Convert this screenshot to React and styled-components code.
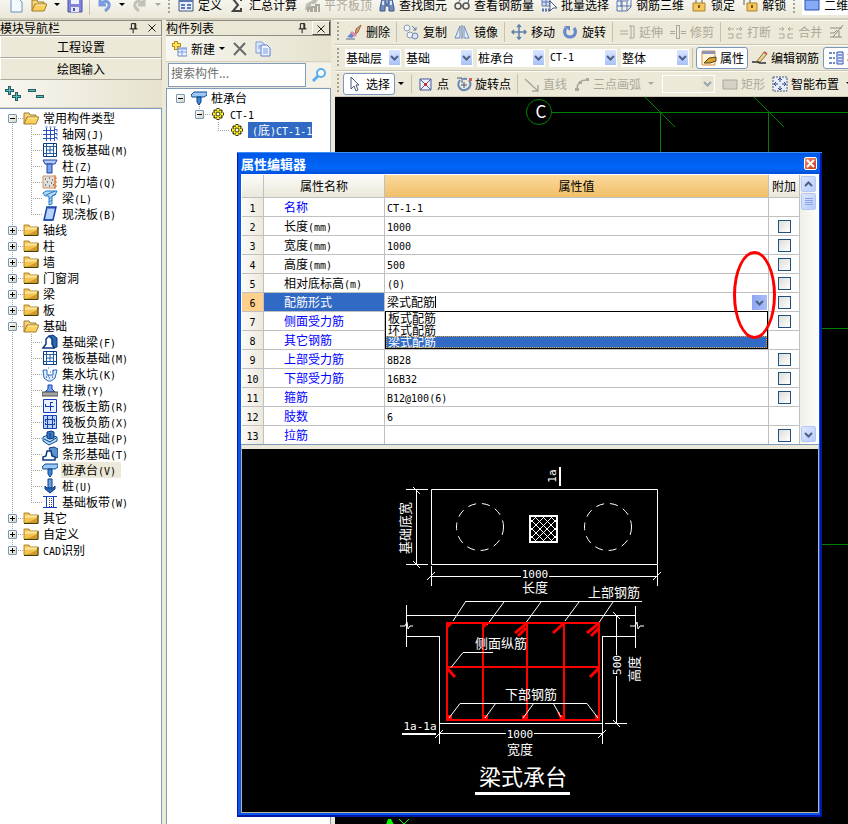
import { Fragment } from "react";
import styled, { createGlobalStyle, css } from "styled-components";

const CJK = `"Noto Sans CJK SC", "Liberation Sans", sans-serif`;
const MONO = `"DejaVu Sans Mono", "Noto Sans CJK SC", monospace`;

const GlobalStyle = createGlobalStyle`
  * {
    box-sizing: border-box;
  }

  body {
    margin: 0;
    overflow: hidden;
    background: #ece9d8;
    color: #000;
    font: 12px/16px ${CJK};
  }

  button,
  input,
  select {
    margin: 0;
    font: inherit;
    color: inherit;
  }
`;

/* ---------- text ---------- */

const Latin = styled.span`
  font-family: ${MONO};
  font-size: 10px;
  line-height: 10px;
`;

// Latin runs are half as wide as a Chinese character
function Label({ children }) {
  return (
    <span>
      {children.split(/([\x21-\x7e]+)/).map((part, i) =>
        i % 2 ? <Latin key={i}>{part}</Latin> : <Fragment key={i}>{part}</Fragment>
      )}
    </span>
  );
}

/* ---------- icons ---------- */

const icons = {
  doc: (
    <path d="M3 1h7l4 4v10H3z" fill="#f4f9ff" stroke="#6d8fb8" />
  ),
  folderOpen: (
    <>
      <path d="M1 14V3h5l1 2h6v3" fill="#f6d478" stroke="#9a7a30" />
      <path d="M1 14l3-7h12l-3 7z" fill="#fbcf5c" stroke="#a07c28" />
      <path d="M5 8h9" stroke="#fff0b4" />
    </>
  ),
  folder: (
    <>
      <path d="M1 13V3h5l1 2h8v8z" fill="#f2c34c" stroke="#b08a30" />
      <path d="M2 6h12M2 7h11" stroke="#fff0b4" />
      <path d="M14 8v5H4z" fill="#d09a28" />
      <path d="M15 5v8.500H1" fill="none" stroke="#4a3808" />
    </>
  ),
  save: (
    <>
      <path d="M1 1h14v14H1z" fill="#8085d8" stroke="#4b50a8" />
      <path d="M4 1h8v6H4z" fill="#eef2ff" />
      <path d="M4 10h8v5H4z" fill="#e6e6f2" />
      <path d="M6 11h2v3H6z" fill="#4b50a8" />
    </>
  ),
  undo: (
    <path d="M4 2v6h6M4 8c2-4 8-5 9-1 1 3-1 5-4 7" fill="none" stroke="#7a9be0" strokeWidth="3" />
  ),
  redo: (
    <path d="M12 2v6H6M12 8c-2-4-8-5-9-1-1 3 1 5 4 7" fill="none" stroke="#c4c2b6" strokeWidth="3" />
  ),
  table: (
    <>
      <path d="M1 2h14v12H1z" fill="#e8effa" stroke="#46597e" />
      <path d="M1 2h14v3H1z" fill="#5c78b0" />
      <path d="M3 8h4M9 8h4M3 11h4M9 11h4" stroke="#5c78b0" strokeWidth="2" />
    </>
  ),
  sigma: (
    <path d="M12 4V2H4l5 6-5 6h8v-3" fill="none" stroke="#444" strokeWidth="2" />
  ),
  slab: (
    <>
      <path d="M2 7l9-5 3 1-3 4H7v6H1z" fill="#c0beb0" />
      <path d="M4 15v-4h3v4M8 15v-5h3v5M12 15V8h3v7" fill="none" stroke="#aaa89a" strokeWidth="2" />
    </>
  ),
  binoculars: (
    <>
      <path d="M3 2h4v5h2V2h4l2 9v3h-5V9H6v5H1v-3z" fill="#6e8cc0" stroke="#3d5688" />
      <path d="M4 4v4M12 4v4" stroke="#dbe6fa" strokeWidth="2" />
    </>
  ),
  glasses: (
    <>
      <circle cx="4" cy="9" r="3" fill="none" stroke="#555" strokeWidth="1.5" />
      <circle cx="12" cy="9" r="3" fill="none" stroke="#555" strokeWidth="1.5" />
      <path d="M7 9h2M4 6l3-4M14 6l1-4" stroke="#555" />
    </>
  ),
  batch: (
    <>
      <path d="M1 1h8v8H1zM1 5h8M5 1v8" fill="#cfdcf4" stroke="#5c78b0" />
      <path d="M1 13h8" stroke="#5c78b0" strokeWidth="3" strokeDasharray="2 1" />
      <path d="M9 4v10l3-3h4z" fill="#fff" stroke="#46597e" />
    </>
  ),
  cage: (
    <path
      d="M1 4h10v10H1zM1 4l4-3h10v9l-4 4M11 4l4-3M6 4v10M1 9h14M5 1v9"
      fill="none"
      stroke="#5876b4"
    />
  ),
  lock: (
    <>
      <path d="M5 7V4c0-4 6-4 6 0v3" fill="none" stroke="#a8a8a8" strokeWidth="2" />
      <path d="M2 6h12v8H2z" fill="#f3c660" stroke="#b08428" />
      <path d="M8 8v3" stroke="#7a5810" strokeWidth="2" />
    </>
  ),
  unlock: (
    <>
      <path d="M2 8V4c0-4 6-4 6 0v2" fill="none" stroke="#a8a8a8" strokeWidth="2" />
      <path d="M5 6h10v8H5z" fill="#f3c660" stroke="#b08428" />
      <path d="M10 8v3" stroke="#7a5810" strokeWidth="2" />
    </>
  ),
  plane: <path d="M1 3h14v10H1z" fill="#86aaf6" stroke="#2c50b0" />,
  erase: (
    <>
      <path d="M10 5l5-4-3 7-3 3z" fill="#d8a070" stroke="#9a6a48" />
      <path d="M6 7l5 4-2 2-5-4z" fill="#e08ca8" />
      <path d="M1 13l4-4 3 3-2 2z" fill="#6888d0" />
      <path d="M0 15h9" stroke="#5a6a90" />
    </>
  ),
  copy2: (
    <>
      <circle cx="4" cy="4" r="3" fill="#f2f4f8" stroke="#8a9ab8" />
      <circle cx="7" cy="11" r="3" fill="#f2f4f8" stroke="#8a9ab8" />
      <circle cx="12" cy="12" r="3" fill="#d8e2f2" stroke="#6e84b0" />
      <path d="M9 2l4 4M13 3v3h-3" fill="none" stroke="#5c78b0" />
    </>
  ),
  mirror: (
    <>
      <path d="M6 2v12H1zM10 2v12h5z" fill="#e4ecfa" stroke="#6e8cc0" />
      <path d="M8 1v14" stroke="#5c78b0" />
    </>
  ),
  move: (
    <path
      d="M8 1v14M1 8h14M6 3l2-2 2 2M6 13l2 2 2-2M3 6L1 8l2 2M13 6l2 2-2 2"
      fill="none"
      stroke="#6080b0"
      strokeWidth="1.5"
    />
  ),
  rotate: (
    <>
      <path d="M4 4c-3 4-1 9 4 9s7-5 4-9" fill="none" stroke="#6888cc" strokeWidth="3" />
      <path d="M2 2h6v5z" fill="#6888cc" />
    </>
  ),
  extend: (
    <path d="M1 7h8M1 10h8M12 2v12M15 2v12M10 2h5M10 14h5" fill="none" stroke="#aaa89a" />
  ),
  trim: (
    <path
      d="M0 7.500h5M0 9.500h5M11 7.500h5M11 9.500h5M6.500 1v14M9.500 1v14M6 1.500h4M6 14.500h4"
      fill="none"
      stroke="#aaa89a"
    />
  ),
  breakUp: (
    <path
      d="M1 5h6M9 5h6M3 3L1 5l2 2M13 3l2 2-2 2M1 10h5v4H1M15 10h-5v4h5"
      fill="none"
      stroke="#aaa89a"
    />
  ),
  merge: (
    <path
      d="M1 5h5M10 5h5M4 3l2 2-2 2M12 3l-2 2 2 2M1 10h5v4H1M15 10h-5v4h5"
      fill="none"
      stroke="#aaa89a"
    />
  ),
  split: (
    <path d="M1 4h12M1 13h12M4 13L14 1M1 9h4l3-3M10 13V7" fill="none" stroke="#8e8c80" />
  ),
  property: (
    <>
      <path d="M1 1h13v14H1z" fill="#fff4d8" stroke="#e09040" />
      <path d="M1 1h13v3H1z" fill="#8a96b8" />
      <path d="M3 13l5-5 7-1v4l-6 2z" fill="#d8a030" stroke="#5a4410" />
    </>
  ),
  pencil: (
    <>
      <path d="M5 11l7-9 3 2-7 8z" fill="#ead08c" stroke="#8a7444" />
      <path d="M12 2l3 2" stroke="#c85858" strokeWidth="2" />
      <path d="M0 12h5l3 1h6" fill="none" stroke="#333" strokeWidth="1.5" />
    </>
  ),
  params: (
    <>
      <path d="M9 2h6v12H9z" fill="#dfe9ff" stroke="#2c50b0" />
      <path d="M10 5h4M10 8h4M10 11h4" stroke="#2c50b0" />
      <path d="M1 3h3M1 8h3M1 13h3M5 3h2M5 8h2M5 13h2" stroke="#6e8cc0" strokeWidth="2" />
    </>
  ),
  cursor: <path d="M5 1v12l3-3 2 5 2-1-2-5h3z" fill="#fff" stroke="#46597e" />,
  point: (
    <>
      <path d="M2 3h11v11H2zM2 3l11 11M13 3L2 14" fill="#eef0fa" stroke="#4a5a98" />
      <path d="M6 7h3v3H6z" fill="#d03030" />
    </>
  ),
  rotatePoint: (
    <>
      <path d="M4 4c-4 5 0 11 5 10s7-6 4-10M7 3a6 6 0 0 1 4 0" fill="none" stroke="#6888b8" strokeWidth="2" />
      <path d="M1 2h5v5M8 6v6M5 9h6" fill="none" stroke="#46597e" />
      <path d="M13 2h3v3h-3z" fill="#d06060" />
    </>
  ),
  line: <path d="M1 3l12 11M14 9v6H8" fill="none" stroke="#aaa89a" strokeWidth="1.5" />,
  arc: (
    <>
      <path d="M3 13C3 7 7 4 13 4" fill="none" stroke="#aaa89a" strokeWidth="1.5" />
      <path d="M1 12h4v3H1zM5 5h3v3H5zM12 2h3v3h-3z" fill="#aaa89a" />
    </>
  ),
  rect: <path d="M1 4h14v9H1z" fill="#d4d2c4" stroke="#aaa89a" />,
  smart: (
    <>
      <path d="M1 1h14v14H1z" fill="#e8effa" stroke="#46597e" strokeDasharray="2 1" />
      <path
        d="M8 2v4M8 10v4M2 8h4M10 8h4M6 4l2-2 2 2M6 12l2 2 2-2M4 6L2 8l2 2M12 6l2 2-2 2"
        fill="none"
        stroke="#2c4888"
      />
    </>
  ),
  newItem: (
    <>
      <path d="M5 0v9M1 4h9" stroke="#b89018" strokeWidth="4" />
      <path d="M5 1v7M2 4h7" stroke="#ffe860" strokeWidth="2" />
      <path d="M7 7h9v8H7z" fill="#eef4ff" stroke="#6e8cc0" />
      <path d="M7 8h9M11 9v6M7 11h9" stroke="#7a9be0" />
    </>
  ),
  remove: <path d="M2 2l12 12M13 2L2 14" stroke="#6a6a6a" strokeWidth="2" />,
  duplicate: (
    <>
      <path d="M1 1h6l3 3v8H1z" fill="#dfe9ff" stroke="#7a9be0" />
      <path d="M6 4h6l3 3v8H6z" fill="#eef4ff" stroke="#5c80d0" />
      <path d="M8 8h5M8 10h5M8 12h5M3 5h3M3 7h3" stroke="#7a9be0" />
    </>
  ),
  expand: (
    <>
      <path d="M4.500 0v9M0 4.500h9M11.500 6v9M7 10.500h9" stroke="#2a5c60" strokeWidth="3" />
      <path d="M4.500 1v7M1 4.500h7M11.500 7v7M8 10.500h7" stroke="#4cc0c0" />
    </>
  ),
  collapse: (
    <>
      <path d="M0 4.500h8M8 10.500h8" stroke="#2a5c60" strokeWidth="3" />
      <path d="M1 4.500h6M9 10.500h6" stroke="#4cc0c0" />
    </>
  ),
  search: (
    <>
      <circle cx="10" cy="6" r="4" fill="#fff" stroke="#5aaef0" strokeWidth="2" />
      <path d="M7 9l-5 5" stroke="#5aaef0" strokeWidth="3" />
    </>
  ),
  grid: (
    <path
      d="M4.500 2v13M8.500 2v13M12.500 2v13M1 4.500h12M1 8.500h12M1 12.500h12M13 3.500h2v2M13 7.500h2v2M13 11.500h2v2M3.500 1h2M7.500 1h2M11.500 1h2"
      fill="none"
      stroke="#2850c0"
    />
  ),
  raft: (
    <>
      <path d="M1.500 1.500h13v13h-13z" fill="#fff" stroke="#0c3a80" />
      <path d="M4.500 2v12M11.500 2v12M2 4.500h12M2 11.500h12M8 5v6M5 8h6" stroke="#2460a8" />
    </>
  ),
  column: (
    <>
      <path d="M1 2h14l-2 4H3z" fill="#b4ccf8" stroke="#2040a0" />
      <path d="M5 6h5v9H5z" fill="#7aa4f0" stroke="#2040a0" />
    </>
  ),
  wall: (
    <>
      <path d="M1 2h12v12H1z" fill="#e0ded8" stroke="#c89468" />
      <path d="M3 5h1M7 4h1M10 6h1M5 8h1M9 9h1M3 11h1M7 12h1M11 11h1" stroke="#222" />
      <path d="M13 1v14M13 4h2M13 8h2M13 12h2" stroke="#e07020" />
    </>
  ),
  beam: (
    <>
      <path d="M1 3l3-2h11l-2 4-3 1v8l-3 1V6H3z" fill="#b4dcfa" stroke="#2878c0" />
      <path d="M4 5l9-4M10 6l4-2M7 9l3-2M7 12l3-2" stroke="#2878c0" />
    </>
  ),
  cast: (
    <>
      <path d="M5 1h9l-3 13H2z" fill="#b8d4fa" stroke="#1440a8" strokeWidth="1.5" />
      <path d="M6 2h7M3 14h8" stroke="#1440a8" />
    </>
  ),
  footBeam: (
    <>
      <path d="M7 2l4-1 4 3v9l-4 1z" fill="#2868b0" stroke="#0c3a80" />
      <path d="M1 14l3-4V5l3-3 3 3v5l2 4z" fill="#fff" stroke="#0c3a80" strokeWidth="1.5" />
    </>
  ),
  pit: (
    <>
      <path d="M1 4h4v5h6V4h4l-2 8-4 3H6l-4-3z" fill="#dcebfc" stroke="#2868c0" />
      <path d="M4 11h1M7 12h1M10 11h1M6 10h1" stroke="#0c3a80" />
      <path d="M6 2h1M10 5h1M8 6h1" stroke="#2868c0" />
    </>
  ),
  pier: (
    <>
      <path d="M6 3h4v4l3 3H3l3-3z" fill="#7aa4f0" stroke="#1440a8" />
      <path d="M0 10h16v4H0z" fill="#a4a4a4" stroke="#505050" />
    </>
  ),
  rebarMain: (
    <>
      <path d="M1.500 1.500h13v13h-13z" fill="#e8f0fe" stroke="#1440c0" />
      <path d="M3 8.500h9M8.500 4v9M8.500 4.500H11M3.500 6v3" fill="none" stroke="#1440c0" />
    </>
  ),
  rebarNeg: (
    <>
      <path d="M1.500 1.500h13v13h-13z" fill="#bcd0fa" stroke="#1440c0" />
      <path
        d="M5.500 2v12M10.500 2v12M3 5.500h10M3 10.500h10M3.500 5v3M12.500 5v3M3.500 11V9M12.500 11V9"
        fill="none"
        stroke="#1440a8"
      />
    </>
  ),
  pad: (
    <>
      <path d="M1 7l5-2 9 2v4l-8 4-6-4z" fill="#b4dcfa" stroke="#0c4a90" />
      <path d="M5 2l4-1 3 1v6L8 9 5 8z" fill="#3878c0" stroke="#0c3a80" />
      <path d="M8 3v6M2 9l6 3 6-4" fill="none" stroke="#0c3a80" />
    </>
  ),
  strip: (
    <>
      <path d="M7 2l5-1 4 2v8l-4 2z" fill="#5a94d0" stroke="#0c3a80" />
      <path d="M1 14v-3l3-1 1-5h4l1 5 3 1v3z" fill="#fff" stroke="#0c3a80" strokeWidth="1.5" />
    </>
  ),
  cap: (
    <>
      <path d="M0 5l3-3h13v3l-3 2H1z" fill="#9cc8f8" stroke="#0c4a90" />
      <path d="M6 7h4v5l-2 3-2-3z" fill="#3c88d8" stroke="#0c3a80" />
    </>
  ),
  pile: (
    <>
      <path d="M6 1h4v9H6z" fill="#6aa4e0" stroke="#0c3a80" />
      <path d="M3 8l2 2h6l2-2v3l-5 4-5-4z" fill="#2868b0" stroke="#0c3a80" />
    </>
  ),
  band: (
    <>
      <path d="M1 2.500h14M1 13.500h14M4.500 3v10M11.500 3v10" stroke="#1440c0" />
      <path d="M7.500 4v9M9.500 4v9" stroke="#444" strokeDasharray="1 1" />
    </>
  ),
  gear: (
    <>
      <path
        d="M8 2v12M2 8h12M4 4l8 8M12 4l-8 8"
        stroke="#3a3600"
        strokeWidth="3"
      />
      <path
        d="M8 3v10M3 8h10M5 5l6 6M11 5l-6 6"
        stroke="#ffee20"
        strokeWidth="2"
      />
      <circle cx="8" cy="8" r="2" fill="#fff" stroke="#3a3600" />
    </>
  ),
  pin: <path d="M5 3h5v6M5 3v6M9 3v6M3 9h9M7 9v5" fill="none" stroke="#000" />,
  close: <path d="M4 4l8 8M12 4l-8 8" stroke="#000" />,
};

const Svg = styled.svg`
  display: block;
  flex: none;
`;

function Icon({ name, size = 16 }) {
  return (
    <Svg width={size} height={size} viewBox="0 0 16 16" aria-hidden="true">
      {icons[name]}
    </Svg>
  );
}

function Chevron({ up = false }) {
  return (
    <Svg width="9" height="9" viewBox="0 0 9 9" aria-hidden="true">
      <path d={up ? "M1 6l3.500-3.500L8 6" : "M1 3l3.500 3.500L8 3"} fill="none" stroke="#4d6185" strokeWidth="2" />
    </Svg>
  );
}

/* ---------- toolbars ---------- */

const Page = styled.div`
  display: flex;
  flex-direction: column;
  height: 100vh;
  overflow: hidden;
`;

const Toolbar = styled.div`
  display: flex;
  flex: none;
  align-items: center;
  gap: ${(p) => p.$gap || 7}px;
  height: ${(p) => p.$height || 26}px;
  padding-left: 2px;
  overflow: hidden;
  white-space: nowrap;
  background: #ece9d8;
  border-bottom: 1px solid #cac6b2;
  box-shadow: inset 0 1px #fbfaf3;
`;

const MainToolbar = styled(Toolbar)`
  height: 20px;
  padding: 0 0 9px 8px;
  background: linear-gradient(#f7f6ef, #ebe8d8);
  border-bottom: 2px solid #d2cfbc;
  box-shadow: none;
`;

const Gripper = styled.span`
  flex: none;
  width: 2px;
  height: 20px;
  margin-right: ${(p) => p.$after || 0}px;
  background: repeating-linear-gradient(#a5a292 0 2px, transparent 2px 4px);
`;

const Separator = styled.span`
  flex: none;
  width: 1px;
  height: 20px;
  margin: 0 -1px;
  background: #c5c2b0;
`;

const ToolButton = styled.button`
  display: flex;
  flex: none;
  align-items: center;
  gap: ${(p) => p.$gap || 4}px;
  height: 22px;
  padding: 0;
  border: 0;
  background: none;
  color: ${(p) => (p.disabled ? "#aca899" : "#000")};

  ${(p) =>
    p.$pressed &&
    css`
      padding: 0 3px 0 4px;
      border: 1px solid #7a98be;
      border-radius: 3px;
      background: #fff;
    `}
`;

const SelectTool = styled(ToolButton)`
  margin: 0 -4px 0 -3px;
  padding: 0 4px 0 2px;
`;

const Caret = styled.span`
  flex: none;
  border: 3px solid transparent;
  border-top-color: ${(p) => (p.$off ? "#aca899" : "#000")};
  border-bottom: 0;
`;

const CaretButton = styled.button`
  display: flex;
  flex: none;
  align-items: center;
  width: 7px;
  height: 20px;
  padding: 0;
  border: 0;
  background: none;
`;

const Combo = styled.label`
  display: flex;
  flex: none;
  align-items: center;
  width: ${(p) => p.$width}px;
  height: 18px;
  padding: 1px;
  background: ${(p) => (p.$off ? "#ece9d8" : "#fff")};
  border: ${(p) => (p.$off ? "1px solid #fff" : "0")};

  select {
    flex: 1;
    min-width: 0;
    height: 16px;
    padding: 0;
    border: 0;
    outline: 0;
    appearance: none;
    background: none;
    font-family: ${(p) => (p.$latin ? MONO : CJK)};
    font-size: ${(p) => (p.$latin ? 10 : 12)}px;
    line-height: 16px;
  }
`;

const ComboArrow = styled.span`
  display: grid;
  flex: none;
  place-items: center;
  width: 11px;
  height: 15px;
  background: ${(p) => (p.$off ? "#e4e1d2" : "linear-gradient(#dbe6ff, #a9c2f8)")};
  opacity: ${(p) => (p.$off ? 0.5 : 1)};
`;

const ViewCombo = styled.button`
  display: flex;
  flex: 1;
  align-items: center;
  gap: 4px;
  min-width: 0;
  height: 20px;
  padding: 0 2px;
  border: 0;
  background: #fff;
`;

function Tool({ icon, text, ...rest }) {
  return (
    <ToolButton type="button" {...rest}>
      <Icon name={icon} />
      {text}
    </ToolButton>
  );
}

function DropDown({ label, value, width, latin, off }) {
  return (
    <Combo $width={width} $latin={latin} $off={off}>
      <select aria-label={label} defaultValue={value} disabled={off}>
        <option value={value}>{value}</option>
      </select>
      <ComboArrow $off={off}>
        <Chevron />
      </ComboArrow>
    </Combo>
  );
}

function IconOnly({ icon, label }) {
  return (
    <ToolButton type="button" aria-label={label}>
      <Icon name={icon} />
    </ToolButton>
  );
}

function MoreButton({ label, off }) {
  return (
    <CaretButton type="button" aria-label={label} disabled={off}>
      <Caret $off={off} />
    </CaretButton>
  );
}

function TopBar() {
  return (
    <MainToolbar>
      <IconOnly icon="doc" label="新建工程" />
      <IconOnly icon="folderOpen" label="打开" />
      <Caret />
      <IconOnly icon="save" label="保存" />
      <Separator />
      <IconOnly icon="undo" label="撤销" />
      <Caret />
      <IconOnly icon="redo" label="恢复" />
      <Caret $off />
      <Gripper $after={1} />
      <Tool icon="table" text="定义" />
      <Tool icon="sigma" text="汇总计算" />
      <Tool icon="slab" text="平齐板顶" disabled />
      <Tool icon="binoculars" text="查找图元" />
      <Tool icon="glasses" text="查看钢筋量" />
      <Tool icon="batch" text="批量选择" />
      <Tool icon="cage" text="钢筋三维" />
      <Tool icon="lock" text="锁定" />
      <Tool icon="unlock" text="解锁" />
      <Gripper />
      <ViewCombo type="button">
        <Icon name="plane" />
        二维
      </ViewCombo>
    </MainToolbar>
  );
}

function EditBar() {
  return (
    <Toolbar $height={25}>
      <Gripper />
      <Tool icon="erase" text="删除" />
      <Separator />
      <Tool icon="copy2" text="复制" />
      <Tool icon="mirror" text="镜像" />
      <Separator />
      <Tool icon="move" text="移动" />
      <Tool icon="rotate" text="旋转" />
      <Separator />
      <Tool icon="extend" text="延伸" disabled />
      <Tool icon="trim" text="修剪" disabled />
      <Separator />
      <Tool icon="breakUp" text="打断" disabled />
      <Tool icon="merge" text="合并" disabled />
      <IconOnly icon="split" label="分割" />
    </Toolbar>
  );
}

function FilterBar() {
  return (
    <Toolbar $gap={4}>
      <Gripper $after={2} />
      <DropDown label="楼层" value="基础层" width={56} />
      <DropDown label="构件类型" value="基础" width={68} />
      <DropDown label="构件" value="桩承台" width={68} />
      <DropDown label="名称" value="CT-1" width={68} latin />
      <DropDown label="单元" value="整体" width={68} />
      <Separator />
      <Tool icon="property" text="属性" $pressed $gap={3} />
      <Tool icon="pencil" text="编辑钢筋" $gap={3} />
      <Tool icon="params" text="构件列表" $pressed $gap={3} />
    </Toolbar>
  );
}

function DrawBar() {
  return (
    <Toolbar>
      <Gripper />
      <SelectTool type="button" $pressed>
        <Icon name="cursor" />
        选择
      </SelectTool>
      <MoreButton label="选择方式" />
      <Separator />
      <Tool icon="point" text="点" $gap={3} />
      <Tool icon="rotatePoint" text="旋转点" $gap={3} />
      <Separator />
      <Tool icon="line" text="直线" $gap={3} disabled />
      <Tool icon="arc" text="三点画弧" $gap={3} disabled />
      <MoreButton label="画弧方式" off />
      <DropDown label="半径" value="" width={53} off />
      <Tool icon="rect" text="矩形" $gap={3} disabled />
      <Tool icon="smart" text="智能布置" $gap={3} />
      <MoreButton label="布置方式" />
    </Toolbar>
  );
}

/* ---------- side panels ---------- */

const Body = styled.div`
  display: grid;
  flex: 1;
  grid-template-columns: 162px 165px minmax(0, 1fr);
  gap: 4px;
  min-height: 0;
`;

const Panel = styled.aside`
  display: flex;
  flex-direction: column;
  min-width: 0;
`;

const PanelHead = styled.header`
  display: flex;
  flex: none;
  align-items: center;
  height: 16px;
  border: 1px solid #8e8c80;
  border-left-width: 0;
  background: #ebe7d6;

  h2 {
    flex: 1;
    margin: 0;
    font-size: 12px;
    font-weight: 400;
    line-height: 14px;
  }
`;

const HeadButton = styled.button`
  display: grid;
  place-items: center;
  width: 18px;
  height: 14px;
  padding: 0;
  border: 0;
  background: none;

  ${(p) =>
    p.$raised &&
    css`
      border: 1px solid #fff;
      border-right-color: #444;
      border-bottom-color: #444;
    `}
`;

const SectionButton = styled.button`
  flex: none;
  height: 22px;
  padding: 0;
  border: 1px solid #fff;
  border-right-color: #aca899;
  border-bottom-color: #aca899;
  background: #ece9d8;
`;

const PanelTools = styled.div`
  display: flex;
  flex: none;
  align-items: center;
  gap: 7px;
  height: ${(p) => p.$height}px;
  padding: 0 5px;
  background: linear-gradient(90deg, #f8f7f1, #e6e2ce);
  border-bottom: 1px solid #d6d2bf;
`;

const SearchRow = styled.div`
  display: grid;
  flex: none;
  grid-template-columns: minmax(0, 1fr) 25px;
  height: 26px;
  padding: 1px 0 1px 2px;

  input {
    padding: 0 2px 5px;
    border: 1px solid #7f9db9;
    outline: 0;
    background: #fff;
  }

  input::placeholder {
    color: #6e6e6e;
    opacity: 1;
  }

  button {
    display: grid;
    place-items: center;
    padding: 0;
    border: 0;
    background: #f4f2e8;
  }
`;

const TreeBox = styled.ul`
  flex: 1;
  min-height: 0;
  margin: 0;
  padding: 1px 0;
  overflow: hidden;
  list-style: none;
  background: #fff;
  border: 1px solid #7f9db9;
  border-left-width: ${(p) => (p.$flush ? 0 : 1)}px;
  border-bottom: 0;
`;

const TreeRow = styled.li`
  display: flex;
  align-items: center;
  height: 16px;
  white-space: nowrap;
`;

const Guide = styled.span`
  display: flex;
  flex: none;
  align-items: center;
  width: ${(p) => p.$width}px;
  height: 16px;
  padding-left: ${(p) => p.$at - 4}px;
  background-image: repeating-linear-gradient(#a8a69a 0 1px, transparent 1px 2px),
    repeating-linear-gradient(90deg, #a8a69a 0 1px, transparent 1px 2px);
  background-repeat: no-repeat;
  background-position:
    ${(p) => p.$at}px ${(p) => (p.$part === "start" ? 8 : 0)}px,
    ${(p) => p.$at}px 8px;
  background-size:
    1px ${(p) => ({ none: 0, start: 8, end: 8 })[p.$part] ?? 16}px,
    ${(p) => (p.$arm ? p.$width - p.$at : 0)}px 1px;
`;

const Toggle = styled.button`
  display: grid;
  place-items: center;
  width: 9px;
  height: 9px;
  padding: 0;
  border: 1px solid #7898b5;
  border-radius: 1px;
  background: linear-gradient(135deg, #fff, #d8d2c4);
`;

const TreeLabel = styled.span`
  height: 16px;
  margin-left: ${(p) => (p.$mark ? 3 : 4)}px;
  padding: ${(p) => (p.$mark === "active" ? "0 0 0 4px" : p.$mark ? "0 5px 0 1px" : 0)};
  background: ${(p) => ({ active: "#316ac5", current: "#ece9d8" })[p.$mark]};
  color: ${(p) => (p.$mark === "active" ? "#fff" : "#000")};
`;

function TreeToggle({ open }) {
  return (
    <Toggle type="button" aria-label={open ? "收起" : "展开"}>
      <Svg width="5" height="5" viewBox="0 0 5 5" aria-hidden="true">
        <path d={open ? "M0 2h5v1H0z" : "M0 2h2V0h1v2h2v1H3v2H2V3H0z"} />
      </Svg>
    </Toggle>
  );
}

const navTree = [
  {
    name: "常用构件类型",
    items: [
      ["grid", "轴网(J)"],
      ["raft", "筏板基础(M)"],
      ["column", "柱(Z)"],
      ["wall", "剪力墙(Q)"],
      ["beam", "梁(L)"],
      ["cast", "现浇板(B)"],
    ],
  },
  { name: "轴线" },
  { name: "柱" },
  { name: "墙" },
  { name: "门窗洞" },
  { name: "梁" },
  { name: "板" },
  {
    name: "基础",
    items: [
      ["footBeam", "基础梁(F)"],
      ["raft", "筏板基础(M)"],
      ["pit", "集水坑(K)"],
      ["pier", "柱墩(Y)"],
      ["rebarMain", "筏板主筋(R)"],
      ["rebarNeg", "筏板负筋(X)"],
      ["pad", "独立基础(P)"],
      ["strip", "条形基础(T)"],
      ["cap", "桩承台(V)", "current"],
      ["pile", "桩(U)"],
      ["band", "基础板带(W)"],
    ],
  },
  { name: "其它" },
  { name: "自定义" },
  { name: "CAD识别" },
];

function PanelTitle({ children, raised }) {
  return (
    <PanelHead>
      <h2>{children}</h2>
      <HeadButton type="button" aria-label="固定">
        <Icon name="pin" size={14} />
      </HeadButton>
      <HeadButton type="button" aria-label="关闭" $raised={raised}>
        <Icon name="close" size={14} />
      </HeadButton>
    </PanelHead>
  );
}

function Navigator() {
  return (
    <Panel>
      <PanelTitle>模块导航栏</PanelTitle>
      <SectionButton type="button">工程设置</SectionButton>
      <SectionButton type="button">绘图输入</SectionButton>
      <PanelTools $height={28}>
        <IconOnly icon="expand" label="全部展开" />
        <IconOnly icon="collapse" label="全部收起" />
      </PanelTools>
      <TreeBox $flush>
        {navTree.map((group, g) => (
          <Fragment key={group.name}>
            <TreeRow>
              <Guide
                $width={23}
                $at={12}
                $arm
                $part={g === 0 ? "start" : g === navTree.length - 1 ? "end" : "full"}
              >
                <TreeToggle open={Boolean(group.items)} />
              </Guide>
              <Icon name={group.items ? "folderOpen" : "folder"} />
              <TreeLabel>
                <Label>{group.name}</Label>
              </TreeLabel>
            </TreeRow>
            {group.items?.map(([icon, name, mark], i) => (
              <TreeRow key={name}>
                <Guide $width={23} $at={12} />
                <Guide
                  $width={19}
                  $at={8}
                  $arm
                  $part={i === group.items.length - 1 ? "end" : "full"}
                />
                <Icon name={icon} />
                <TreeLabel $mark={mark}>
                  <Label>{name}</Label>
                </TreeLabel>
              </TreeRow>
            ))}
          </Fragment>
        ))}
      </TreeBox>
    </Panel>
  );
}

function ComponentList() {
  return (
    <Panel>
      <PanelTitle raised>构件列表</PanelTitle>
      <PanelTools $height={26}>
        <ToolButton type="button" $gap={4}>
          <Icon name="newItem" />
          新建
          <Caret />
        </ToolButton>
        <IconOnly icon="remove" label="删除构件" />
        <IconOnly icon="duplicate" label="复制构件" />
      </PanelTools>
      <SearchRow>
        <input type="text" aria-label="搜索构件" placeholder="搜索构件..." />
        <button type="button" aria-label="搜索">
          <Icon name="search" />
        </button>
      </SearchRow>
      <TreeBox>
        <TreeRow>
          <Guide $width={24} $at={13} $part="none">
            <TreeToggle open />
          </Guide>
          <Icon name="cap" />
          <TreeLabel>桩承台</TreeLabel>
        </TreeRow>
        <TreeRow>
          <Guide $width={24} $at={13} $part="none" />
          <Guide $width={19} $at={8} $part="end" $arm>
            <TreeToggle open />
          </Guide>
          <Icon name="gear" />
          <TreeLabel>
            <Label>CT-1</Label>
          </TreeLabel>
        </TreeRow>
        <TreeRow>
          <Guide $width={24} $at={13} $part="none" />
          <Guide $width={19} $at={8} $part="none" />
          <Guide $width={19} $at={8} $part="end" $arm />
          <Icon name="gear" />
          <TreeLabel $mark="active">
            <Label>(底)CT-1-1</Label>
          </TreeLabel>
        </TreeRow>
      </TreeBox>
    </Panel>
  );
}

/* ---------- model canvas ---------- */

const Main = styled.main`
  display: flex;
  flex-direction: column;
  min-width: 0;
`;

const Canvas = styled.div`
  flex: 1;
  min-height: 0;
  overflow: hidden;
  background: #000;
`;

const SvgText = styled.text`
  fill: #fff;
  font-family: ${(p) => (p.$latin ? MONO : CJK)};
  font-size: ${(p) => p.$size || 13}px;
  text-anchor: middle;
`;

function AxisGrid() {
  return (
    <Svg width="513" height="727" viewBox="335 97 513 727" overflow="visible">
      <g fill="none" stroke="#008000">
        <circle cx="539" cy="112" r="12.500" />
        <path d="M552 112.500h900M660.500 112v680M768.500 112v680M645 97l30 30M754 97l30 30" />
        <path d="M552 328.500h900M552 544.500h900" />
      </g>
      <SvgText x="541" y="118" $size={17}>
        C
      </SvgText>
      <path d="M386 825l2-6h3l3 6z" fill="#00ff00" />
      <path d="M399 819l9 9M409 819l-9 9" stroke="#00ff00" />
    </Svg>
  );
}

/* ---------- property editor ---------- */

const Dialog = styled.section`
  position: absolute;
  inset: 152px 26px 7px 237px;
  display: flex;
  flex-direction: column;
  padding: 0 3px 4px 4px;
  background: #0a54ea;
  border-top: 1px solid #3a8cf8;
  box-shadow: inset 1px 0 #0019a8, inset -2px -2px #0019a8;
`;

const TitleBar = styled.header`
  display: flex;
  flex: none;
  align-items: center;
  height: 21px;
  padding-right: 2px;
  background: linear-gradient(#0058e6, #0066f8 70%, #0050dc);
  color: #fff;

  h1 {
    flex: 1;
    margin: 0;
    font-size: 13px;
    font-weight: 700;
    line-height: 20px;
  }
`;

const CloseButton = styled.button`
  display: grid;
  place-items: center;
  width: 13px;
  height: 13px;
  padding: 0;
  border: 1px solid #fff;
  border-radius: 2px;
  background: linear-gradient(135deg, #f09070, #c83818);
`;

const TableArea = styled.div`
  display: grid;
  flex: none;
  grid-template-rows: minmax(0, 1fr);
  grid-template-columns: minmax(0, 1fr) 19px;
  height: 271px;
  padding: 1px 0 1px 1px;
  overflow: hidden;
  background: #fff;
  border-bottom: 1px solid #7f9db9;
`;

const TableClip = styled.div`
  min-width: 0;
`;

const Table = styled.table`
  width: 100%;
  table-layout: fixed;
  border-collapse: separate;
  border-spacing: 0;
`;

const HeadCell = styled.th`
  width: ${(p) => (p.$width ? `${p.$width}px` : "auto")};
  height: 23px;
  padding: 0;
  border-right: 1px solid #c0c0c0;
  border-bottom: 1px solid #c0c0c0;
  background: ${(p) =>
    p.$hot ? "linear-gradient(#fad89c, #f0c068)" : "linear-gradient(#fcfbf8, #ebe8da)"};
  font-weight: 400;
  white-space: nowrap;
`;

const Cell = styled.td`
  position: relative;
  height: 19px;
  padding: 0 0 0 2px;
  border-right: 1px solid #c0c0c0;
  border-bottom: 1px solid #c0c0c0;
  line-height: 16px;
  white-space: nowrap;
`;

const NumberCell = styled(Cell)`
  padding: 0;
  background: ${(p) => (p.$active ? "#ffd08c" : "linear-gradient(90deg, #fbfaf7, #ece9dc)")};
  text-align: center;
`;

const NameCell = styled(Cell)`
  padding-left: 20px;
  background: ${(p) => (p.$active ? "#316ac5" : "#fff")};
  color: ${(p) => (p.$active ? "#fff" : p.$public ? "#0000ff" : "#000")};
`;

const CheckCell = styled(Cell)`
  padding: 0;

  input {
    display: block;
    width: 13px;
    height: 13px;
    margin: 0 auto;
    appearance: none;
    border: 1px solid #1c5180;
    background: linear-gradient(135deg, #dcdcd7, #fff);
  }
`;

const Editor = styled.div`
  display: flex;
  align-items: center;
  height: 18px;

  input {
    width: 48px;
    height: 16px;
    padding: 0;
    border: 0;
    outline: 0;
    background: none;
  }
`;

const TextCursor = styled.span`
  width: 1px;
  height: 12px;
  margin-right: auto;
  background: #000;
`;

const EditorArrow = styled.button`
  display: grid;
  place-items: center;
  width: 15px;
  height: 15px;
  margin-right: 1px;
  padding: 0;
  border: 0;
  background: linear-gradient(90deg, #8ea6f4, #a8bcf8);
`;

const Options = styled.ul`
  position: absolute;
  z-index: 1;
  top: 18px;
  left: 0;
  right: 0;
  margin: 0;
  padding: 0;
  list-style: none;
  background: #fff;
  border: 1px solid #000;
`;

const Option = styled.li`
  height: 12px;
  padding-left: 2px;
  line-height: 12px;
  background: ${(p) => (p.$active ? "#316ac5" : "none")};
  color: ${(p) => (p.$active ? "#fff" : "#000")};
  outline: ${(p) => (p.$active ? "1px dotted #e0a030" : "0")};
  outline-offset: -1px;
`;

const RedRing = styled.span`
  position: absolute;
  z-index: 2;
  top: -42px;
  right: -8px;
  width: 43px;
  height: 88px;
  border: 3px solid #f00;
  border-radius: 50%;
  pointer-events: none;
`;

const ScrollBar = styled.div`
  display: flex;
  flex-direction: column;
  align-items: center;
  gap: 1px;
  padding: 1px 2px 1px 0;
  background: linear-gradient(90deg, #f0efe8, #fefefb);
`;

const ScrollButton = styled.button`
  display: grid;
  flex: none;
  place-items: center;
  width: 15px;
  height: ${(p) => (p.$thumb ? 17 : 16)}px;
  padding: 0;
  border: 1px solid #b4c8f6;
  border-radius: 2px;
  background: linear-gradient(135deg, #dce6ff, #b8ccfa);
  margin-bottom: ${(p) => (p.$thumb ? "auto" : 0)};
`;

const Preview = styled.div`
  display: flex;
  flex: 1;
  justify-content: center;
  min-height: 0;
  overflow: hidden;
  background: #000;
  border-top: 4px solid #ece9d8;
  border-right: 1px solid #b8b4a0;
  border-bottom: 1px solid #b8b4a0;
  border-left: 1px solid #b8b4a0;
`;

const options = ["板式配筋", "环式配筋", "梁式配筋"];

// public attributes are shown in blue
const rows = [
  { name: "名称", value: "CT-1-1", blue: true, noCheck: true },
  { name: "长度(mm)", value: "1000" },
  { name: "宽度(mm)", value: "1000" },
  { name: "高度(mm)", value: "500" },
  { name: "相对底标高(m)", value: "(0)" },
  { name: "配筋形式", value: "梁式配筋", blue: true, active: true },
  { name: "侧面受力筋", value: "", blue: true },
  { name: "其它钢筋", value: "", blue: true, noCheck: true },
  { name: "上部受力筋", value: "8B28", blue: true },
  { name: "下部受力筋", value: "16B32", blue: true },
  { name: "箍筋", value: "B12@100(6)", blue: true },
  { name: "肢数", value: "6", blue: true, noCheck: true },
  { name: "拉筋", value: "", blue: true },
];

function ValueEditor({ name, value }) {
  return (
    <>
      <Editor>
        <input type="text" aria-label={name} defaultValue={value} />
        <TextCursor />
        <EditorArrow type="button" aria-label="选择配筋形式">
          <Chevron />
        </EditorArrow>
      </Editor>
      <Options role="listbox">
        {options.map((option) => (
          <Option
            key={option}
            role="option"
            aria-selected={option === value}
            $active={option === value}
          >
            {option}
          </Option>
        ))}
      </Options>
      <RedRing />
    </>
  );
}

function PropertyTable() {
  return (
    <Table>
      <thead>
        <tr>
          <HeadCell $width={22} />
          <HeadCell $width={121}>属性名称</HeadCell>
          <HeadCell $hot>属性值</HeadCell>
          <HeadCell $width={31}>附加</HeadCell>
        </tr>
      </thead>
      <tbody>
        {rows.map((row, i) => (
          <tr key={row.name}>
            <NumberCell $active={row.active}>
              <Latin>{i + 1}</Latin>
            </NumberCell>
            <NameCell $active={row.active} $public={row.blue}>
              <Label>{row.name}</Label>
            </NameCell>
            <Cell>
              {row.active ? (
                <ValueEditor name={row.name} value={row.value} />
              ) : (
                <Label>{row.value}</Label>
              )}
            </Cell>
            <CheckCell>
              {!row.noCheck && <input type="checkbox" aria-label={`附加 ${row.name}`} />}
            </CheckCell>
          </tr>
        ))}
      </tbody>
    </Table>
  );
}

function PlanView() {
  return (
    <>
      <g fill="none" stroke="#fff">
        <path d="M431.500 489.500h226v75h-226z" />
        <path d="M406 489.500h22M406 564.500h22M416.500 489v76M413 487l7 7M413 561l7 7" />
        <circle cx="480" cy="527" r="23.500" strokeDasharray="8 6" />
        <circle cx="608" cy="527" r="23.500" strokeDasharray="8 6" />
        <path d="M431.500 566v20M657.500 565v21M431 576.500h90M549 576.500h108M427 580l8-8M653 580l8-8" />
        <path
          d="M530 523l7-7M530 531l15-15M530 539l23-23M534 542l23-23M542 542l15-15M550 542l7-7
            M550 516l7 7M542 516l15 15M534 516l23 23M530 519l23 23M530 527l15 15M530 535l7 7"
        />
        <path d="M530 516h27v26h-27zM560 467v19" strokeWidth="2" />
      </g>
      <SvgText transform="translate(410 528) rotate(-90)">基础底宽</SvgText>
      <SvgText transform="translate(556 476) rotate(-90)" $latin $size={11}>
        1a
      </SvgText>
      <SvgText x="535" y="578" $latin $size={11}>
        1000
      </SvgText>
      <SvgText x="535" y="592">长度</SvgText>
    </>
  );
}

function SectionView() {
  return (
    <>
      <g fill="none" stroke="#fff">
        <path d="M466 601.500h176M466 601l-13 20M504 602l-17 23M541 602l-16 22M579 602l-14 19M613 602l-15 22" />
        <path d="M406 615.500h230M406.500 605v42M635.500 606v42M406 636.500h33M602 636.500h34" />
        <path d="M400 626h5l2-4 1 7 2-3h3M630 626h5l2-4 1 7 2-3h4" />
        <path d="M439.500 636v108M602.500 636v108M439 723.500h163M605 723.500h22" />
        <path d="M616.500 615v40M616.500 676v47M613 612l7 7M613 720l7 7" />
        <path d="M439 733.500h67M534 733.500h68M435 738l8-8M598 738l8-8" />
      </g>
      <g fill="none" stroke="#f00" strokeWidth="2">
        <path d="M447 623h152v97H447zM483 623v97M527 623v97M564 623v97M447 667h152" />
        <path
          d="M526 624l-11 9M526 628l-8 8M563 624l-10 9M598 624l-11 9M599 628l-8 8
            M447 627l4-4M483 627l4-4M447 668l8 9M599 668l-9 9"
          strokeWidth="3"
        />
      </g>
      <path
        d="M448 715h4v4h-4zM484 715h4v4h-4zM522 715h4v4h-4zM557 712h3v3h4v4h-4zM595 715h4v4h-4z"
        fill="#f00"
      />
      <g fill="none" stroke="#fff">
        <path d="M493 652.500h-30l-12 15" />
        <path d="M449 718l11-14.500h127l11 14.500M496 703l-11 15M534 703l-11 15M553 703l8 14" />
        <path d="M402 734h34" strokeWidth="2" />
        <path d="M475 793.500h95" strokeWidth="3" />
      </g>
      <SvgText x="614" y="597">上部钢筋</SvgText>
      <SvgText x="501" y="648">侧面纵筋</SvgText>
      <SvgText x="531" y="699">下部钢筋</SvgText>
      <SvgText transform="translate(621 665) rotate(-90)" $latin $size={11}>
        500
      </SvgText>
      <SvgText transform="translate(639 669) rotate(-90)">高度</SvgText>
      <SvgText x="420" y="730" $latin $size={11}>
        1a-1a
      </SvgText>
      <SvgText x="520" y="738" $latin $size={11}>
        1000
      </SvgText>
      <SvgText x="520" y="754">宽度</SvgText>
      <SvgText x="523" y="785" $size={22}>
        梁式承台
      </SvgText>
    </>
  );
}

function PropertyEditor() {
  return (
    <Dialog role="dialog" aria-label="属性编辑器">
      <TitleBar>
        <h1>属性编辑器</h1>
        <CloseButton type="button" aria-label="关闭">
          <Svg width="9" height="9" viewBox="0 0 9 9" aria-hidden="true">
            <path d="M1 1l7 7M8 1L1 8" stroke="#fff" strokeWidth="2" />
          </Svg>
        </CloseButton>
      </TitleBar>
      <TableArea>
        <TableClip>
          <PropertyTable />
        </TableClip>
        <ScrollBar>
          <ScrollButton type="button" aria-label="向上滚动">
            <Chevron up />
          </ScrollButton>
          <ScrollButton type="button" aria-label="滚动条" $thumb>
            <Svg width="8" height="8" viewBox="0 0 8 8" aria-hidden="true">
              <path d="M0 0.500h8M0 2.500h8M0 4.500h8M0 6.500h8" stroke="#8ca4e8" />
            </Svg>
          </ScrollButton>
          <ScrollButton type="button" aria-label="向下滚动">
            <Chevron />
          </ScrollButton>
        </ScrollBar>
      </TableArea>
      <Preview>
        <Svg width="576" height="364" viewBox="242 449 576 364">
          <PlanView />
          <SectionView />
        </Svg>
      </Preview>
    </Dialog>
  );
}

export default function App() {
  return (
    <>
      <GlobalStyle />
      <Page>
        <TopBar />
        <Body>
          <Navigator />
          <ComponentList />
          <Main>
            <EditBar />
            <FilterBar />
            <DrawBar />
            <Canvas>
              <AxisGrid />
            </Canvas>
          </Main>
        </Body>
      </Page>
      <PropertyEditor />
    </>
  );
}
